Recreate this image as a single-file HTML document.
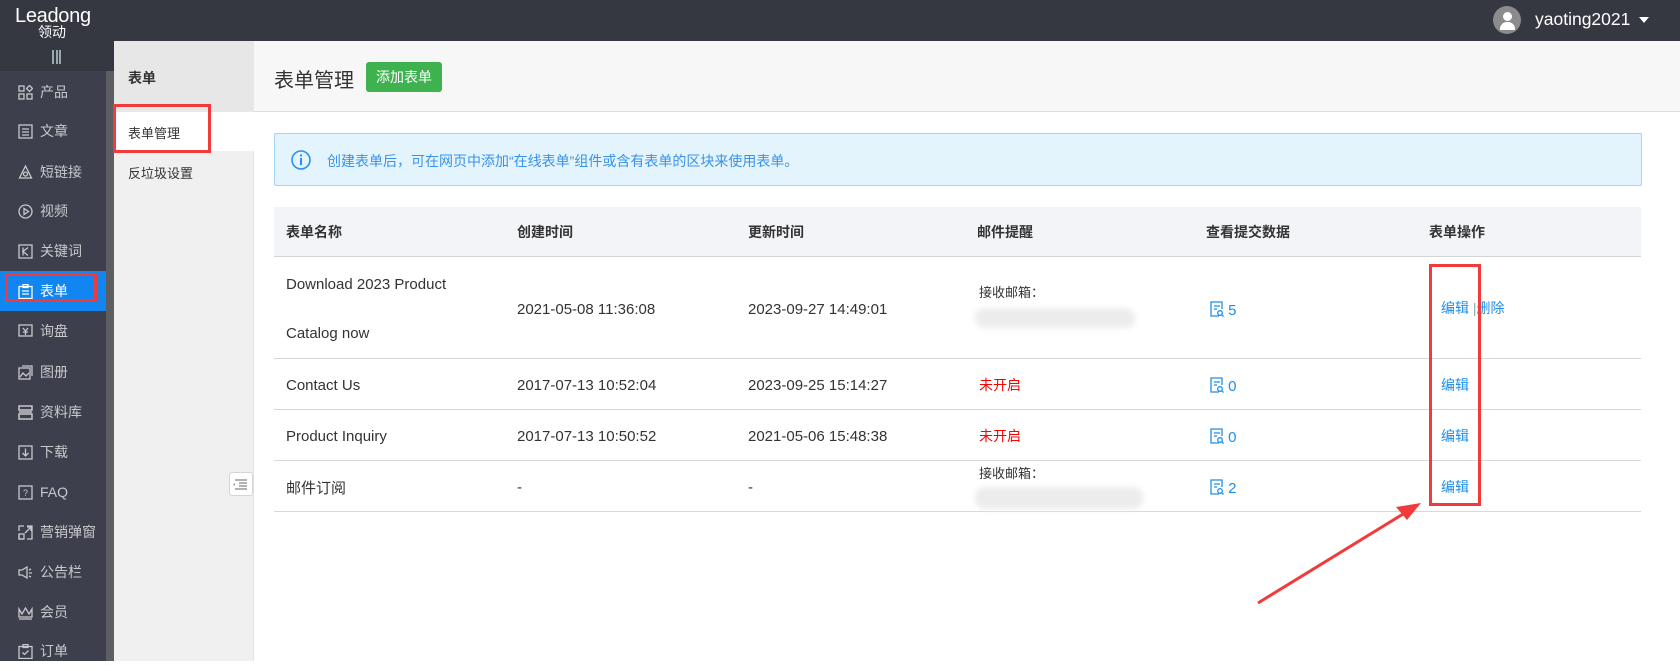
<!DOCTYPE html>
<html><head><meta charset="utf-8"><style>
*{margin:0;padding:0;box-sizing:border-box}
body{width:1680px;height:661px;overflow:hidden;position:relative;background:#fff;font-family:"Liberation Sans","Noto Sans CJK SC",sans-serif;color:#333}
.a{position:absolute}
.top{left:0;top:0;width:1680px;height:41px;background:#353741}
.side{left:0;top:41px;width:106px;height:620px;background:#3d3f4c}
.sidehd{left:0;top:41px;width:114px;height:30px;background:#353741}
.strip{left:106px;top:71px;width:8px;height:590px;background:#5d5e62}
.it{position:absolute;left:0;width:106px;height:40px;color:#c8c9cc;font-size:14px;line-height:40px;padding-left:40px}
.it svg{position:absolute;left:18px;top:13px}
.sub{left:114px;top:41px;width:140px;height:620px;background:#f0f0f0;border-right:1px solid #e2e2e2}
.hdr{left:254px;top:41px;width:1426px;height:71px;background:#f7f7f7;border-bottom:1px solid #dedede}
.th{position:absolute;top:207px;height:50px;line-height:50px;font-size:14px;font-weight:bold;color:#333}
.td{position:absolute;font-size:15px;color:#333}
.line{position:absolute;left:274px;width:1367px;height:1px;background:#d8d8d8}
.blue{color:#1e8ee9}
.blur{position:absolute;background:#ececec;filter:blur(3px);border-radius:10px}
</style></head><body>
<div class="a top"></div>
<div class="a" style="left:15px;top:5px;color:#fff;font-size:20px;letter-spacing:-0.3px">Leadong</div>
<div class="a" style="left:38px;top:22px;color:#fff;font-size:14px">领动</div>
<div class="a side"></div>
<div class="a sidehd"></div>
<div class="a" style="left:52px;top:50px;width:9px;height:14px;border-left:2px solid #9aa;border-right:2px solid #9aa"><div style="margin-left:2px;width:2px;height:14px;background:#9aa"></div></div>
<div class="a strip"></div>

<div class="it" style="top:72px"><svg width="15" height="15" fill="none" stroke="#c8c9cc" stroke-width="1.3"><rect x="1" y="1" width="5" height="5"/><rect x="1" y="9" width="5" height="5"/><rect x="9" y="9" width="5" height="5"/><path d="M11.5 0.5l3 3-3 3-3-3z"/></svg>产品</div>
<div class="it" style="top:111px"><svg width="15" height="15" fill="none" stroke="#c8c9cc" stroke-width="1.3"><rect x="1" y="1" width="13" height="13"/><path d="M4 5h7M4 8h7M4 11h7"/></svg>文章</div>
<div class="it" style="top:152px"><svg width="15" height="15" fill="none" stroke="#c8c9cc" stroke-width="1.3"><path d="M7.5 1l6 12H1.5z"/><circle cx="7.5" cy="9" r="2"/></svg>短链接</div>
<div class="it" style="top:191px"><svg width="15" height="15" fill="none" stroke="#c8c9cc" stroke-width="1.3"><circle cx="7.5" cy="7.5" r="6.5"/><path d="M6 4.5v6l4.5-3z"/></svg>视频</div>
<div class="it" style="top:231px"><svg width="15" height="15" fill="none" stroke="#c8c9cc" stroke-width="1.3"><rect x="1" y="1" width="13" height="13"/><path d="M5 3.5v8M10 3.5l-5 4 5 4"/></svg>关键词</div>
<div class="it" style="top:271px;background:#1286f0;color:#fff"><svg width="15" height="15" fill="none" stroke="#fff" stroke-width="1.3"><rect x="1" y="2.5" width="13" height="12"/><rect x="5" y="0.5" width="5" height="3"/><path d="M4 7h7M4 10h7"/></svg>表单</div>
<div class="a" style="left:5px;top:273px;width:92px;height:29px;border:3px solid #f23a3a"></div>
<div class="it" style="top:311px"><svg width="15" height="15" fill="none" stroke="#c8c9cc" stroke-width="1.3"><rect x="1" y="1" width="13" height="11"/><path d="M5 4l2.5 3 2.5-3M5 8h5M7.5 7v4"/></svg>询盘</div>
<div class="it" style="top:352px"><svg width="15" height="15" fill="none" stroke="#c8c9cc" stroke-width="1.3"><rect x="1" y="3" width="11" height="11"/><path d="M4 1h10v10M2 12l3-4 3 3 3-3"/></svg>图册</div>
<div class="it" style="top:392px"><svg width="15" height="15" fill="none" stroke="#c8c9cc" stroke-width="1.5"><rect x="1" y="1" width="13" height="4"/><rect x="1" y="9" width="13" height="5"/><path d="M1 7h13"/></svg>资料库</div>
<div class="it" style="top:432px"><svg width="15" height="15" fill="none" stroke="#c8c9cc" stroke-width="1.3"><rect x="1" y="1" width="13" height="13"/><path d="M7.5 3.5v7M4.5 8l3 3 3-3"/></svg>下载</div>
<div class="it" style="top:472px"><svg width="15" height="15" fill="none" stroke="#c8c9cc" stroke-width="1.3"><rect x="1" y="1" width="13" height="13"/><text x="5" y="11" font-size="9" fill="#c8c9cc" stroke="none">?</text></svg>FAQ</div>
<div class="it" style="top:512px"><svg width="15" height="15" fill="none" stroke="#c8c9cc" stroke-width="1.3"><path d="M1 6V1h5M9 1h5v13H9M1 9v5h5M7 8l6-6M9 2h4v4"/><rect x="1" y="9" width="5" height="5"/></svg>营销弹窗</div>
<div class="it" style="top:552px"><svg width="15" height="15" fill="none" stroke="#c8c9cc" stroke-width="1.3"><path d="M1 5h3l5-3v11l-5-3H1zM11 5l2-1M11 8h3M11 11l2 1"/></svg>公告栏</div>
<div class="it" style="top:592px"><svg width="15" height="15" fill="none" stroke="#c8c9cc" stroke-width="1.3"><path d="M1 4l3 5 3.5-6 3.5 6 3-5v8H1zM1 14h13"/></svg>会员</div>
<div class="it" style="top:631px"><svg width="15" height="15" fill="none" stroke="#c8c9cc" stroke-width="1.3"><rect x="1" y="2.5" width="13" height="12"/><rect x="5" y="0.5" width="5" height="3"/><path d="M4.5 8.5l2 2 4-4"/></svg>订单</div>

<div class="a sub"></div>
<div class="a" style="left:114px;top:41px;width:140px;height:71px;background:#e8e7e8"></div>
<div class="a" style="left:128px;top:68px;font-size:14px;font-weight:bold">表单</div>
<div class="a" style="left:114px;top:112px;width:140px;height:39px;background:#fff"></div>
<div class="a" style="left:128px;top:123px;font-size:13px">表单管理</div>
<div class="a" style="left:113px;top:104px;width:98px;height:49px;border:3px solid #f23a3a"></div>
<div class="a" style="left:128px;top:163px;font-size:13px">反垃圾设置</div>
<div class="a" style="left:229px;top:472px;width:24px;height:24px;background:#fff;border:1px solid #d5d5d5;border-radius:3px"><svg width="22" height="22"><path d="M5 7h12M9 10h8M9 13h8M5 16h12" stroke="#999" stroke-width="1.6"/><path d="M5 10v3l-2-1.5z" fill="#999"/></svg></div>

<div class="a hdr"></div>
<div class="a" style="left:274px;top:64px;font-size:20px;color:#333">表单管理</div>
<div class="a" style="left:366px;top:62px;width:76px;height:30px;background:#3eb24f;border-radius:3px;color:#fff;font-size:14px;line-height:30px;text-align:center">添加表单</div>

<div class="a" style="left:274px;top:133px;width:1368px;height:53px;background:#e4f4fd;border:1px solid #a6d3f6;border-radius:2px"></div>
<svg class="a" style="left:290px;top:149px" width="22" height="22"><circle cx="11" cy="11" r="9" fill="none" stroke="#2c8ef0" stroke-width="1.6"/><rect x="10" y="9" width="2" height="7" fill="#2c8ef0"/><rect x="10" y="5.5" width="2" height="2" fill="#2c8ef0"/></svg>
<div class="a" style="left:327px;top:151px;font-size:14px;color:#3a93e8">创建表单后，可在网页中添加“在线表单”组件或含有表单的区块来使用表单。</div>

<div class="a" style="left:274px;top:207px;width:1367px;height:50px;background:#f3f4f8;border-bottom:1px solid #d5d5d5"></div>
<div class="th" style="left:286px">表单名称</div>
<div class="th" style="left:517px">创建时间</div>
<div class="th" style="left:748px">更新时间</div>
<div class="th" style="left:977px">邮件提醒</div>
<div class="th" style="left:1206px">查看提交数据</div>
<div class="th" style="left:1429px">表单操作</div>

<div class="line" style="top:358px"></div>
<div class="line" style="top:409px"></div>
<div class="line" style="top:460px"></div>
<div class="line" style="top:511px"></div>

<div class="td" style="left:286px;top:276px">Download 2023 Product</div>
<div class="td" style="left:286px;top:325px">Catalog now</div>
<div class="td" style="left:517px;top:301px">2021-05-08 11:36:08</div>
<div class="td" style="left:748px;top:301px">2023-09-27 14:49:01</div>
<div class="td" style="left:979px;top:282px;font-size:13px">接收邮箱：</div>
<div class="blur" style="left:975px;top:308px;width:160px;height:20px"></div>
<div class="td blue" style="left:1210px;top:301px"><svg width="14" height="16" style="vertical-align:-2px" fill="none" stroke="#1e8ee9" stroke-width="1.3"><path d="M9 15H1V1h11v7M4 5h6M4 8h3"/><circle cx="10" cy="12" r="2.3"/><path d="M11.7 13.7l1.8 1.8"/></svg> 5</div>
<div class="td blue" style="left:1441px;top:298px;font-size:14px">编辑 <span style="color:#8ab">|</span>删除</div>

<div class="td" style="left:286px;top:377px">Contact Us</div>
<div class="td" style="left:517px;top:377px">2017-07-13 10:52:04</div>
<div class="td" style="left:748px;top:377px">2023-09-25 15:14:27</div>
<div class="td" style="left:979px;top:375px;color:#f00;font-size:14px">未开启</div>
<div class="td blue" style="left:1210px;top:377px"><svg width="14" height="16" style="vertical-align:-2px" fill="none" stroke="#1e8ee9" stroke-width="1.3"><path d="M9 15H1V1h11v7M4 5h6M4 8h3"/><circle cx="10" cy="12" r="2.3"/><path d="M11.7 13.7l1.8 1.8"/></svg> 0</div>
<div class="td blue" style="left:1441px;top:375px;font-size:14px">编辑</div>

<div class="td" style="left:286px;top:428px">Product Inquiry</div>
<div class="td" style="left:517px;top:428px">2017-07-13 10:50:52</div>
<div class="td" style="left:748px;top:428px">2021-05-06 15:48:38</div>
<div class="td" style="left:979px;top:426px;color:#f00;font-size:14px">未开启</div>
<div class="td blue" style="left:1210px;top:428px"><svg width="14" height="16" style="vertical-align:-2px" fill="none" stroke="#1e8ee9" stroke-width="1.3"><path d="M9 15H1V1h11v7M4 5h6M4 8h3"/><circle cx="10" cy="12" r="2.3"/><path d="M11.7 13.7l1.8 1.8"/></svg> 0</div>
<div class="td blue" style="left:1441px;top:426px;font-size:14px">编辑</div>

<div class="td" style="left:286px;top:477px">邮件订阅</div>
<div class="td" style="left:517px;top:479px">-</div>
<div class="td" style="left:748px;top:479px">-</div>
<div class="td" style="left:979px;top:463px;font-size:13px">接收邮箱：</div>
<div class="blur" style="left:975px;top:487px;width:168px;height:22px"></div>
<div class="td blue" style="left:1210px;top:479px"><svg width="14" height="16" style="vertical-align:-2px" fill="none" stroke="#1e8ee9" stroke-width="1.3"><path d="M9 15H1V1h11v7M4 5h6M4 8h3"/><circle cx="10" cy="12" r="2.3"/><path d="M11.7 13.7l1.8 1.8"/></svg> 2</div>
<div class="td blue" style="left:1441px;top:477px;font-size:14px">编辑</div>

<div class="a" style="left:1429px;top:264px;width:52px;height:242px;border:3px solid #f23a3a"></div>
<svg class="a" style="left:0;top:0" width="1680" height="661"><path d="M1258 603L1408 511" stroke="#f23a3a" stroke-width="3"/><path d="M1421 503L1396 507L1407 520z" fill="#f23a3a"/></svg>

<div class="a" style="left:1493px;top:6px;width:28px;height:28px;border-radius:50%;background:#8b8b8d;overflow:hidden"><div style="position:absolute;left:10px;top:6px;width:9px;height:9px;border-radius:50%;background:#fff"></div><div style="position:absolute;left:7px;top:16px;width:15px;height:8px;border-radius:7px 7px 0 0;background:#fff"></div></div>
<div class="a" style="left:1535px;top:9px;color:#fff;font-size:17.5px">yaoting2021</div>
<div class="a" style="left:1639px;top:17px;width:0;height:0;border-left:5px solid transparent;border-right:5px solid transparent;border-top:6px solid #fff"></div>
</body></html>
